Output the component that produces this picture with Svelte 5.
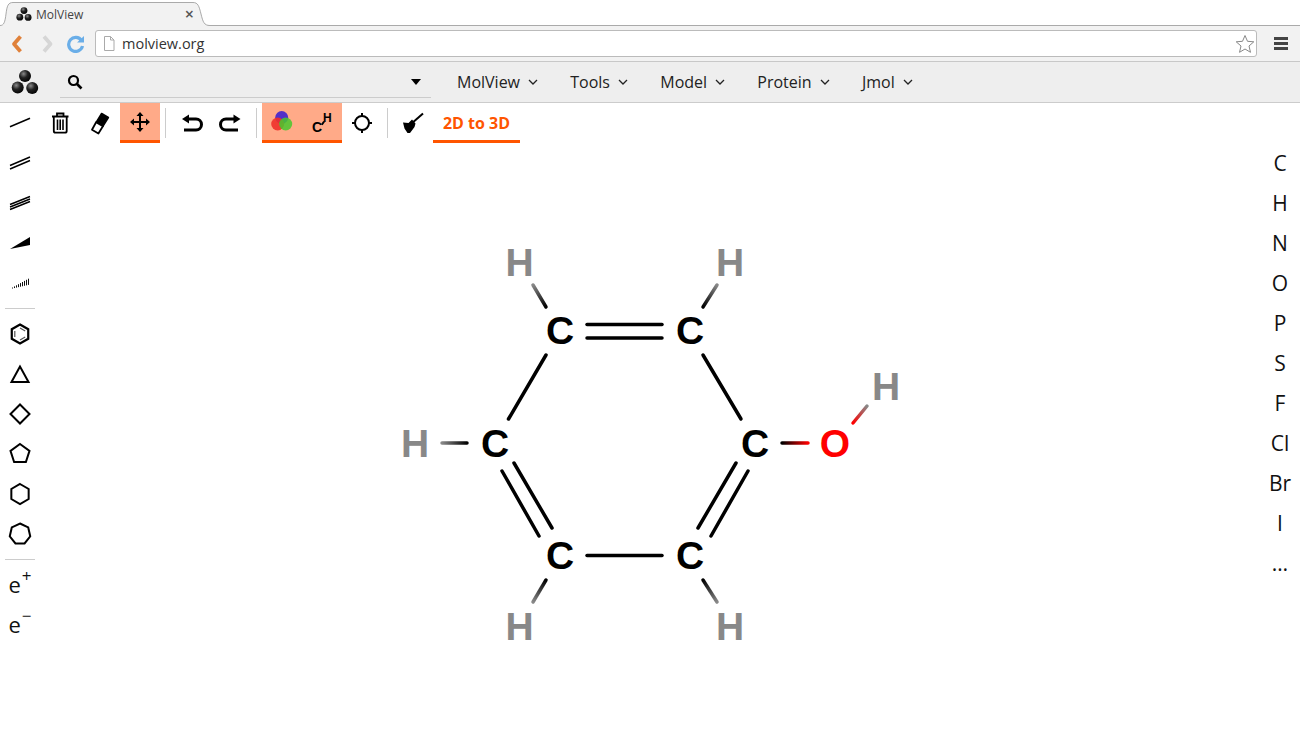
<script>
    const menus = ['MolView', 'Tools', 'Model', 'Protein', 'Jmol'];
    const elements = ['C', 'H', 'N', 'O', 'P', 'S', 'F', 'Cl', 'Br', 'I', '…'];

    // Regular polygon points for the ring buttons
    function ring(n, r, start = -90) {
        const pts = [];
        for (let i = 0; i < n; i++) {
            const a = ((start + (360 / n) * i) * Math.PI) / 180;
            pts.push((20 + r * Math.cos(a)).toFixed(2) + ',' + (20 + r * Math.sin(a)).toFixed(2));
        }
        return pts.join(' ');
    }

    const rings = [ring(4, 9.5), ring(5, 10), ring(6, 10), ring(7, 10.5)];
    const hashes = [12.5, 14.5, 16.5, 18.5, 20.5, 22.5, 24.5, 26.5, 28.5];

    const bonds = [
        [587, 324.5, 662, 324.5],
        [587, 338, 662, 338],
        [546, 355, 508.5, 419],
        [703, 355, 741, 419],
        [514, 463, 552, 528],
        [502, 471, 539, 536],
        [736, 463, 698, 528],
        [748, 471, 711, 536],
        [587, 555.5, 662, 555.5]
    ];

    const gradBonds = [
        { id: 'hb1', x1: 533, y1: 285, x2: 546, y2: 307, from: '#888', to: '#000' },
        { id: 'hb2', x1: 717, y1: 285, x2: 703, y2: 307, from: '#888', to: '#000' },
        { id: 'hb3', x1: 442, y1: 443, x2: 467, y2: 443, from: '#888', to: '#000' },
        { id: 'hb4', x1: 533, y1: 602, x2: 546, y2: 580, from: '#888', to: '#000' },
        { id: 'hb5', x1: 717, y1: 602, x2: 703, y2: 580, from: '#888', to: '#000' },
        { id: 'hb6', x1: 782, y1: 443, x2: 808, y2: 443, from: '#000', to: '#f00' },
        { id: 'hb7', x1: 853, y1: 423, x2: 867, y2: 406, from: '#f00', to: '#888' }
    ];

    const atoms = [
        { t: 'C', x: 560, y: 331, c: '#000' },
        { t: 'C', x: 690, y: 331, c: '#000' },
        { t: 'C', x: 755, y: 444, c: '#000' },
        { t: 'C', x: 690, y: 556, c: '#000' },
        { t: 'C', x: 560, y: 556, c: '#000' },
        { t: 'C', x: 495, y: 444, c: '#000' },
        { t: 'O', x: 835, y: 444, c: '#f00' },
        { t: 'H', x: 519.5, y: 263, c: '#888' },
        { t: 'H', x: 730, y: 263, c: '#888' },
        { t: 'H', x: 415, y: 444, c: '#888' },
        { t: 'H', x: 519.5, y: 627, c: '#888' },
        { t: 'H', x: 730, y: 627, c: '#888' },
        { t: 'H', x: 886, y: 387, c: '#888' }
    ];
</script>

{#snippet logo(size, id)}
    <svg width={size} height={size} viewBox="0 0 28 28">
        <defs>
            <radialGradient {id} cx="0.38" cy="0.32" r="0.75">
                <stop offset="0" stop-color="#8a8a8a" />
                <stop offset="0.45" stop-color="#222" />
                <stop offset="1" stop-color="#000" />
            </radialGradient>
        </defs>
        <circle cx="14" cy="8" r="6" fill="url(#{id})" />
        <circle cx="6.700" cy="19.500" r="6" fill="url(#{id})" />
        <circle cx="21.200" cy="20" r="6" fill="url(#{id})" />
    </svg>
{/snippet}

<div class="tabstrip">
    <svg class="tabshape" width="220" height="26" viewBox="0 0 220 26">
        <path d="M0 26 V25.500 C4 25.500 5 22 6 14 C7 6 8 2.500 13 2.500 H193 C198 2.500 199 6 201 14 C203 22 204 25.500 210 25.500 V26 Z" fill="#f2f2f2" />
        <path d="M0 25.500 C4 25.500 5 22 6 14 C7 6 8 2.500 13 2.500 H193 C198 2.500 199 6 201 14 C203 22 204 25.500 210 25.500" fill="none" stroke="#aaa" />
    </svg>
    <div class="tab">
        {@render logo(16, 'tablogo')}
        <span class="tabtitle">MolView</span>
        <span class="tabclose">×</span>
    </div>
</div>

<div class="chrome">
    <svg class="navicon" width="16" height="20" viewBox="0 0 16 20">
        <path d="M11.500 2.500 L5 10 L11.500 17.500" fill="none" stroke="#e0813a" stroke-width="3.800" stroke-linejoin="round" />
    </svg>
    <svg class="navicon" width="16" height="20" viewBox="0 0 16 20">
        <path d="M5 2.500 L11.500 10 L5 17.500" fill="none" stroke="#d6d6d6" stroke-width="3.800" stroke-linejoin="round" />
    </svg>
    <svg class="navicon reload" width="18" height="18" viewBox="0 0 18 18">
        <path d="M14.500 5.500 A7 7 0 1 0 15.500 11" fill="none" stroke="#6aaee8" stroke-width="3.200" />
        <path d="M10 7.500 H17 V1 Z" fill="#6aaee8" />
    </svg>
    <div class="omnibox">
        <svg width="12" height="15" viewBox="0 0 12 15">
            <path d="M1.500 .5 H7.500 L11 4 V14.500 H1.500 Z M7.500 .5 V4 H11" fill="#fff" stroke="#aaa" />
        </svg>
        <span class="url">molview.org</span>
        <svg class="star" width="20" height="20" viewBox="0 0 20 20">
            <path d="M10 1.500 L12.500 7.300 L18.800 7.800 L14 12 L15.500 18.300 L10 15 L4.500 18.300 L6 12 L1.200 7.800 L7.500 7.300 Z" fill="#fff" stroke="#888" stroke-linejoin="round" />
        </svg>
    </div>
    <div class="hamburger"><i></i><i></i><i></i></div>
</div>

<div class="menubar">
    <div class="brand">{@render logo(28, 'brandlogo')}</div>
    <div class="search">
        <svg width="16" height="16" viewBox="0 0 16 16">
            <circle cx="6.500" cy="6.500" r="4.500" fill="none" stroke="#000" stroke-width="2.200" />
            <path d="M10 10 L14.500 14.500" stroke="#000" stroke-width="2.600" />
        </svg>
        <span class="caret"></span>
    </div>
    <nav class="menus">
        {#each menus as menu}
            <div class="menu">
                <span>{menu}</span>
                <svg width="10" height="6" viewBox="0 0 10 6">
                    <path d="M1 1 L5 5 L9 1" fill="none" stroke="#222" stroke-width="1.300" />
                </svg>
            </div>
        {/each}
    </nav>
</div>

<div class="workspace">
    <aside class="leftbar">
        <button>
            <svg viewBox="0 0 40 40"><path d="M10 23.700 L30 15.300" stroke="#000" stroke-width="1.500" /></svg>
        </button>
        <button>
            <svg viewBox="0 0 40 40"><path d="M10 22.500 L30 14 M10 26 L30 17.500" stroke="#000" stroke-width="1.500" /></svg>
        </button>
        <button>
            <svg viewBox="0 0 40 40"><path d="M10 21.500 L30 13.500 M10 24 L30 16 M10 26.500 L30 18.500" stroke="#000" stroke-width="1.400" /></svg>
        </button>
        <button>
            <svg viewBox="0 0 40 40"><polygon points="10,26 30,14 30,22" fill="#000" /></svg>
        </button>
        <button>
            <svg viewBox="0 0 40 40">
                {#each hashes as x, i}
                    <line x1={x} y1={24.5 - i * 1.1} x2={x} y2={25.5 - i * 0.45} stroke="#111" stroke-width="1" />
                {/each}
            </svg>
        </button>
        <hr />
        <button>
            <svg viewBox="0 0 40 40">
                <polygon points={ring(6, 9.500)} fill="none" stroke="#000" stroke-width="2.200" />
                <path d="M20 14 L25.200 17 M25.200 23 L20 26 M14.800 23 L14.800 17" fill="none" stroke="#555" stroke-width="1.200" />
            </svg>
        </button>
        <button>
            <svg viewBox="0 0 40 40"><polygon points="20,12.500 11.500,28 28.500,28" fill="none" stroke="#000" stroke-width="2" /></svg>
        </button>
        {#each rings as pts}
            <button>
                <svg viewBox="0 0 40 40"><polygon points={pts} fill="none" stroke="#000" stroke-width="2" /></svg>
            </button>
        {/each}
        <hr />
        <button class="charge">e<sup>+</sup></button>
        <button class="charge">e<sup>−</sup></button>
    </aside>

    <main class="center">
        <div class="toolbar">
            <button title="Clear">
                <svg viewBox="0 0 40 40">
                    <path d="M12 13.500 H28.500 M17 13.500 V10.500 H23.500 V13.500 M13.800 13.500 V28 Q13.800 29.700 15.500 29.700 H25 Q26.700 29.700 26.700 28 V13.500" fill="none" stroke="#000" stroke-width="1.800" />
                    <path d="M17.500 16.500 V27 M20.200 16.500 V27 M23 16.500 V27" stroke="#000" stroke-width="1.600" />
                </svg>
            </button>
            <button title="Erase">
                <svg viewBox="0 0 40 40">
                    <polygon points="21.600,10.500 28.400,14.500 22.900,23.300 16.100,19.300" fill="#000" stroke="#000" stroke-width="1.500" stroke-linejoin="round" />
                    <polygon points="16.100,19.300 22.900,23.300 18.400,30.500 12,26.800" fill="#fff" stroke="#000" stroke-width="1.800" stroke-linejoin="round" />
                </svg>
            </button>
            <button class="active" title="Move">
                <svg viewBox="0 0 40 40">
                    <path d="M20 12 V28 M12 20 H28" stroke="#000" stroke-width="2" />
                    <path d="M20 10 L23.500 14 H16.500 Z M20 30 L23.500 26 H16.500 Z M10 20 L14 16.500 V23.500 Z M30 20 L26 16.500 V23.500 Z" fill="#000" />
                </svg>
            </button>
            <span class="sep"></span>
            <button title="Undo">
                <svg viewBox="0 0 40 40">
                    <path d="M16 16 H25 A5.500 5.500 0 0 1 25 27 H13" fill="none" stroke="#000" stroke-width="3" />
                    <path d="M11 16 L18 11.500 V20.500 Z" fill="#000" />
                </svg>
            </button>
            <button title="Redo">
                <svg viewBox="0 0 40 40">
                    <path d="M24 16 H15 A5.500 5.500 0 0 0 15 27 H27" fill="none" stroke="#000" stroke-width="3" />
                    <path d="M29.500 16 L22.500 11.500 V20.500 Z" fill="#000" />
                </svg>
            </button>
            <span class="sep"></span>
            <button class="active" title="Colors">
                <svg viewBox="0 0 40 40">
                    <circle cx="19.700" cy="15.500" r="6.500" fill="#5230c8" />
                    <circle cx="15.700" cy="22" r="6.500" fill="#f0302a" fill-opacity="0.900" />
                    <circle cx="23.700" cy="22" r="6.500" fill="#48c82e" fill-opacity="0.850" />
                </svg>
            </button>
            <button class="active hydrogens" title="Hydrogens">
                <span class="cee">C</span><i class="tick"></i><span class="aitch">H</span>
            </button>
            <button title="Center">
                <svg viewBox="0 0 40 40">
                    <circle cx="20" cy="20" r="7" fill="none" stroke="#000" stroke-width="2" />
                    <path d="M20 10 V13 M20 27 V30 M10 20 H13 M27 20 H30" stroke="#000" stroke-width="2" />
                </svg>
            </button>
            <span class="sep"></span>
            <button title="Clean">
                <svg viewBox="0 0 40 40">
                    <path d="M18 21 L30 10.500" stroke="#000" stroke-width="2" />
                    <path d="M10 19.500 L15.500 20 L19 16.500 L22.500 20.500 L21.500 24 L17 30 L14.500 30 L11.500 25.500 Z" fill="#000" />
                </svg>
            </button>
            <button class="convert">2D to 3D</button>
        </div>

        <svg class="sketch" viewBox="40 143 1220 601">
            <defs>
                {#each gradBonds as b}
                    <linearGradient id={b.id} gradientUnits="userSpaceOnUse" x1={b.x1} y1={b.y1} x2={b.x2} y2={b.y2}>
                        <stop offset="0" stop-color={b.from} />
                        <stop offset="1" stop-color={b.to} />
                    </linearGradient>
                {/each}
            </defs>
            {#each bonds as [x1, y1, x2, y2]}
                <line {x1} {y1} {x2} {y2} stroke="#000" stroke-width="3.500" stroke-linecap="round" />
            {/each}
            {#each gradBonds as b}
                <line x1={b.x1} y1={b.y1} x2={b.x2} y2={b.y2} stroke="url(#{b.id})" stroke-width="3.500" stroke-linecap="round" />
            {/each}
            {#each atoms as a}
                <text x={a.x} y={a.y + 13} fill={a.c} text-anchor="middle">{a.t}</text>
            {/each}
        </svg>
    </main>

    <aside class="rightbar">
        {#each elements as el}
            <button>{el}</button>
        {/each}
    </aside>
</div>

<style>
    :global(body) {
        background: #fff;
        overflow: hidden;
    }

    button {
        display: flex;
        align-items: center;
        justify-content: center;
        width: 40px;
        height: 40px;
        padding: 0;
        border: 0;
        background: none;
        font-family: "Open Sans", sans-serif;
        color: #111;
        flex: none;
    }

    button svg {
        width: 40px;
        height: 40px;
        display: block;
    }

    .tabstrip {
        position: relative;
        height: 26px;
        box-sizing: border-box;
        border-bottom: 1px solid #aaa;
        background: #fff;
    }

    .tabshape {
        position: absolute;
        left: 0;
        top: 0;
    }

    .tab {
        position: relative;
        width: 194px;
        height: 25px;
        padding: 3px 0 0 16px;
        box-sizing: border-box;
        display: flex;
        align-items: center;
        gap: 4px;
        font: 12px "Open Sans", sans-serif;
        color: #444;
    }

    .tabtitle {
        flex: 1;
    }

    .tabclose {
        font-size: 16px;
        font-weight: 600;
        color: #555;
    }

    .chrome {
        height: 36px;
        box-sizing: border-box;
        border-bottom: 1px solid #c8c8c8;
        background: #f2f2f2;
        display: flex;
        align-items: center;
        padding: 0 12px 0 9px;
        gap: 14px;
    }

    .navicon {
        flex: none;
    }

    .reload {
        margin-left: -2px;
    }

    .omnibox {
        flex: 1;
        height: 27px;
        margin-left: -4px;
        margin-right: 3px;
        box-sizing: border-box;
        border: 1px solid #bbb;
        border-radius: 3px;
        background: #fff;
        display: flex;
        align-items: center;
        padding: 0 1px 0 7px;
        gap: 7px;
    }

    .url {
        flex: 1;
        font: 14.500px "Open Sans", sans-serif;
        color: #333;
    }

    .star {
        flex: none;
    }

    .hamburger {
        width: 14px;
        display: flex;
        flex-direction: column;
        gap: 2px;
    }

    .hamburger i {
        display: block;
        height: 3px;
        background: #444;
    }

    .menubar {
        height: 41px;
        box-sizing: border-box;
        background: #eee;
        border-bottom: 1px solid #ccc;
        display: flex;
    }

    .brand {
        width: 60px;
        padding-left: 11px;
        box-sizing: border-box;
        display: flex;
        align-items: center;
        flex: none;
    }

    .search {
        width: 371px;
        height: 36px;
        box-sizing: border-box;
        border-bottom: 1px solid #ccc;
        display: flex;
        align-items: center;
        justify-content: space-between;
        padding: 4px 10px 0 7px;
        flex: none;
    }

    .caret {
        width: 0;
        height: 0;
        border-left: 5px solid transparent;
        border-right: 5px solid transparent;
        border-top: 6px solid #000;
    }

    .menus {
        display: flex;
        margin-left: 10px;
    }

    .menu {
        display: flex;
        align-items: center;
        gap: 8px;
        padding: 0 16.250px 0 16px;
        font: 16px "Open Sans", sans-serif;
        color: #222;
    }

    .workspace {
        height: 641px;
        display: flex;
    }

    .leftbar {
        width: 40px;
        flex: none;
    }

    .leftbar hr {
        width: 30px;
        height: 1px;
        margin: 5px auto;
        border: 0;
        background: #ccc;
    }

    .charge {
        font-size: 22px;
        padding-bottom: 2px;
        box-sizing: border-box;
    }

    .charge sup {
        font-size: 17px;
        line-height: 0;
        position: relative;
        top: -8px;
        margin-left: 1px;
    }

    .center {
        flex: 1;
        min-width: 0;
    }

    .toolbar {
        height: 40px;
        display: flex;
    }

    .active {
        background: #ffaa88;
        border-bottom: 3px solid #ff5500;
        box-sizing: border-box;
    }

    .sep {
        width: 1px;
        height: 30px;
        margin: 5px 5px 0;
        background: #ccc;
        flex: none;
    }

    .hydrogens {
        position: relative;
    }

    .cee, .aitch {
        position: absolute;
        font: bold 13px "Liberation Sans", sans-serif;
        color: #000;
    }

    .cee {
        left: 10px;
        top: 16px;
        font-size: 14px;
    }

    .aitch {
        left: 21px;
        top: 8px;
        font-size: 12px;
    }

    .tick {
        position: absolute;
        left: 20px;
        top: 18px;
        width: 1.500px;
        height: 4px;
        background: #000;
        transform: rotate(35deg);
    }

    .convert {
        width: 87px;
        border-bottom: 3px solid #ff5500;
        box-sizing: border-box;
        padding-top: 3px;
        font-size: 16px;
        font-weight: 700;
        color: #ff5500;
    }

    .sketch {
        display: block;
        width: 1220px;
        height: 601px;
        font: bold 39px "Liberation Sans", sans-serif;
    }

    .rightbar {
        width: 40px;
        padding-top: 40px;
        flex: none;
    }

    .rightbar button {
        font-size: 21px;
        box-sizing: border-box;
    }
</style>
